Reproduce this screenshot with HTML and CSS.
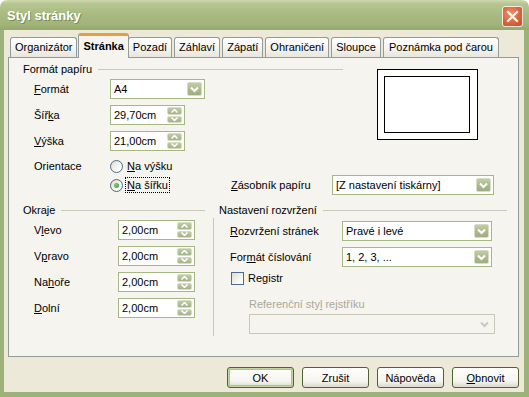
FILE: index.html
```html
<!DOCTYPE html>
<html lang="cs">
<head>
    <meta charset="UTF-8">
    <title>Styl stránky</title>
    <link rel="stylesheet" href="styles.css">
</head>
<body>

    <div class="window">
        <div class="titlebar">
            <span class="title">Styl stránky</span>
            <span class="close">
                <svg viewBox="0 0 21 21" width="21" height="21"><path d="M6 6l9 9M15 6l-9 9" stroke="#fff" stroke-width="2.2" stroke-linecap="square"/></svg>
            </span>
        </div>

        <div class="frame">
            <div class="tabs">
                <span class="tab">Organizátor</span>
                <span class="tab active">Stránka</span>
                <span class="tab">Pozadí</span>
                <span class="tab">Záhlaví</span>
                <span class="tab">Zápatí</span>
                <span class="tab">Ohraničení</span>
                <span class="tab">Sloupce</span>
                <span class="tab wide">Poznámka pod čarou</span>
            </div>

            <div class="panel">
                <!-- formát papíru + náhled -->
                <div class="top">
                    <div class="paper">
                        <div class="sec-head"><span>Formát papíru</span><i class="rule"></i></div>
                        <div class="row">
                            <span class="lbl"><u>F</u>ormát</span>
                            <div class="combo w-format">
                                <span class="val">A4</span>
                                <span class="drop"><svg viewBox="0 0 9 7" width="9" height="7"><path d="M1 1.5l3.5 3.5 3.5-3.5" fill="none" stroke="#fff" stroke-width="2"/></svg></span>
                            </div>
                        </div>
                        <div class="row">
                            <span class="lbl">Šíř<u>k</u>a</span>
                            <div class="combo w-size">
                                <span class="val">29,70cm</span>
                                <span class="spin">
                                    <span class="sb"><svg viewBox="0 0 7 4" width="7" height="4"><path d="M0.5 3.5l3-3 3 3" fill="none" stroke="#fff" stroke-width="1.5"/></svg></span>
                                    <span class="sb"><svg viewBox="0 0 7 4" width="7" height="4"><path d="M0.5 0.5l3 3 3-3" fill="none" stroke="#fff" stroke-width="1.5"/></svg></span>
                                </span>
                            </div>
                        </div>
                        <div class="row">
                            <span class="lbl"><u>V</u>ýška</span>
                            <div class="combo w-size">
                                <span class="val">21,00cm</span>
                                <span class="spin">
                                    <span class="sb"><svg viewBox="0 0 7 4" width="7" height="4"><path d="M0.5 3.5l3-3 3 3" fill="none" stroke="#fff" stroke-width="1.5"/></svg></span>
                                    <span class="sb"><svg viewBox="0 0 7 4" width="7" height="4"><path d="M0.5 0.5l3 3 3-3" fill="none" stroke="#fff" stroke-width="1.5"/></svg></span>
                                </span>
                            </div>
                        </div>
                    </div>
                    <div class="preview"><div class="sheet"></div></div>
                </div>

                <div class="orient">
                    <div class="orient-line">
                        <span class="lbl">Orientace</span>
                        <span class="opt"><span class="radio"></span><span><u>N</u>a výšku</span></span>
                    </div>
                    <div class="orient-line second">
                        <span class="lbl"></span>
                        <span class="opt"><span class="radio checked"></span><span class="focus"><u>N</u>a šířku</span></span>
                        <span class="lbl tray"><u>Z</u>ásobník papíru</span>
                        <div class="combo w-tray">
                            <span class="val">[Z nastavení tiskárny]</span>
                            <span class="drop"><svg viewBox="0 0 9 7" width="9" height="7"><path d="M1 1.5l3.5 3.5 3.5-3.5" fill="none" stroke="#fff" stroke-width="2"/></svg></span>
                        </div>
                    </div>
                </div>

                <div class="bottom">
                    <!-- okraje -->
                    <div class="margins">
                        <div class="sec-head"><span>Okraje</span><i class="rule"></i></div>
                        <div class="row">
                            <span class="lbl lbl-m">V<u>l</u>evo</span>
                            <div class="combo w-margin">
                                <span class="val">2,00cm</span>
                                <span class="spin">
                                    <span class="sb"><svg viewBox="0 0 7 4" width="7" height="4"><path d="M0.5 3.5l3-3 3 3" fill="none" stroke="#fff" stroke-width="1.5"/></svg></span>
                                    <span class="sb"><svg viewBox="0 0 7 4" width="7" height="4"><path d="M0.5 0.5l3 3 3-3" fill="none" stroke="#fff" stroke-width="1.5"/></svg></span>
                                </span>
                            </div>
                        </div>
                        <div class="row">
                            <span class="lbl lbl-m">V<u>p</u>ravo</span>
                            <div class="combo w-margin">
                                <span class="val">2,00cm</span>
                                <span class="spin">
                                    <span class="sb"><svg viewBox="0 0 7 4" width="7" height="4"><path d="M0.5 3.5l3-3 3 3" fill="none" stroke="#fff" stroke-width="1.5"/></svg></span>
                                    <span class="sb"><svg viewBox="0 0 7 4" width="7" height="4"><path d="M0.5 0.5l3 3 3-3" fill="none" stroke="#fff" stroke-width="1.5"/></svg></span>
                                </span>
                            </div>
                        </div>
                        <div class="row">
                            <span class="lbl lbl-m">Na<u>h</u>oře</span>
                            <div class="combo w-margin">
                                <span class="val">2,00cm</span>
                                <span class="spin">
                                    <span class="sb"><svg viewBox="0 0 7 4" width="7" height="4"><path d="M0.5 3.5l3-3 3 3" fill="none" stroke="#fff" stroke-width="1.5"/></svg></span>
                                    <span class="sb"><svg viewBox="0 0 7 4" width="7" height="4"><path d="M0.5 0.5l3 3 3-3" fill="none" stroke="#fff" stroke-width="1.5"/></svg></span>
                                </span>
                            </div>
                        </div>
                        <div class="row">
                            <span class="lbl lbl-m"><u>D</u>olní</span>
                            <div class="combo w-margin">
                                <span class="val">2,00cm</span>
                                <span class="spin">
                                    <span class="sb"><svg viewBox="0 0 7 4" width="7" height="4"><path d="M0.5 3.5l3-3 3 3" fill="none" stroke="#fff" stroke-width="1.5"/></svg></span>
                                    <span class="sb"><svg viewBox="0 0 7 4" width="7" height="4"><path d="M0.5 0.5l3 3 3-3" fill="none" stroke="#fff" stroke-width="1.5"/></svg></span>
                                </span>
                            </div>
                        </div>
                    </div>

                    <!-- nastavení rozvržení -->
                    <div class="layout">
                        <div class="sec-head"><span>Nastavení rozvržení</span><i class="rule"></i></div>
                        <div class="layout-body">
                            <div class="row">
                                <span class="lbl lbl-l"><u>R</u>ozvržení stránek</span>
                                <div class="combo w-layout">
                                    <span class="val">Pravé i levé</span>
                                    <span class="drop"><svg viewBox="0 0 9 7" width="9" height="7"><path d="M1 1.5l3.5 3.5 3.5-3.5" fill="none" stroke="#fff" stroke-width="2"/></svg></span>
                                </div>
                            </div>
                            <div class="row">
                                <span class="lbl lbl-l">For<u>m</u>át číslování</span>
                                <div class="combo w-layout">
                                    <span class="val">1, 2, 3, ...</span>
                                    <span class="drop"><svg viewBox="0 0 9 7" width="9" height="7"><path d="M1 1.5l3.5 3.5 3.5-3.5" fill="none" stroke="#fff" stroke-width="2"/></svg></span>
                                </div>
                            </div>
                            <div class="check-row"><span class="checkbox"></span><span>Re<u>g</u>istr</span></div>
                            <div class="ref-label">Referenční sty<u>l</u> rejstříku</div>
                            <div class="combo w-ref disabled">
                                <span class="val"></span>
                                <span class="drop"><svg viewBox="0 0 9 7" width="9" height="7"><path d="M1 1.5l3.5 3.5 3.5-3.5" fill="none" stroke="#c9c8bd" stroke-width="2"/></svg></span>
                            </div>
                        </div>
                    </div>
                </div>
            </div>

            <div class="buttons">
                <button class="btn default">OK</button>
                <button class="btn">Zrušit</button>
                <button class="btn">Nápověda</button>
                <button class="btn"><u>O</u>bnovit</button>
            </div>
        </div>
    </div>

</body>
</html>
```

FILE: styles.css
```css
:root {
    --face: #ece9d8;
    --panel: #f5f4ef;
    --frame: #9db27a;
    --edit-border: #a5b883;
    --rule: #c9c8bb;
    --tab-border: #919b9c;
}

* {
    margin: 0;
    padding: 0;
    box-sizing: border-box;
}

body {
    background: #fff;
    font-family: "Liberation Sans", Tahoma, Arial, sans-serif;
    font-size: 11px;
    color: #000;
}

u {
    text-underline-offset: 1px;
}

.window {
    width: 529px;
    height: 397px;
    display: flex;
    flex-direction: column;
}

/* ---------- titulek ---------- */
.titlebar {
    height: 30px;
    display: flex;
    align-items: center;
    justify-content: space-between;
    padding: 0 6px 0 7px;
    border-radius: 7px 7px 0 0;
    background: linear-gradient(#cfd9af 0%, #b7c692 12%, #a9bb83 45%, #a2b47b 80%, #95a96c 100%);
}

.title {
    font-weight: bold;
    font-size: 13px;
    color: #fff;
    text-shadow: 1px 1px 0 #7d8f58;
    padding-top: 1px;
}

.close {
    width: 21px;
    height: 21px;
    border: 1px solid #f6ece4;
    border-radius: 3px;
    background: radial-gradient(circle at 40% 35%, #ee9068, #dc5f36 60%, #c54d28);
    display: flex;
    margin-top: 2px;
}

.close svg {
    margin: -1px;
}

/* ---------- rám ---------- */
.frame {
    flex: 1;
    display: flex;
    flex-direction: column;
    background: var(--face);
    border-left: 4px solid var(--frame);
    border-right: 5px solid var(--frame);
    border-bottom: 5px solid var(--frame);
    padding: 3px 5px 0 4px;
}

.tabs {
    display: flex;
    align-items: flex-end;
    height: 24px;
    padding-left: 2px;
    position: relative;
    z-index: 1;
}

.tab {
    height: 20px;
    line-height: 19px;
    padding: 0 4px;
    margin-right: 2px;
    border: 1px solid var(--tab-border);
    border-bottom: none;
    border-radius: 3px 3px 0 0;
    background: linear-gradient(#ffffff, #f3f2ec 60%, #e8e6dc);
    white-space: nowrap;
}

.tab.active {
    height: 25px;
    line-height: 20px;
    margin: 0 0 -1px -1px;
    padding: 0 4px;
    font-weight: bold;
    border-top: 3px solid #e5a043;
    background: var(--panel);
}

.tab.active + .tab {
    margin-left: -1px;
}

.tab.wide {
    width: 116px;
    text-align: center;
}

.panel {
    height: 300px;
    border: 1px solid var(--tab-border);
    background: var(--panel);
    padding-top: 4px;
}

/* ---------- sekce ---------- */
.sec-head {
    display: flex;
    align-items: center;
    height: 14px;
}

.sec-head .rule {
    flex: 1;
    height: 1px;
    margin-left: 6px;
    background: var(--rule);
}

.row {
    display: flex;
    align-items: center;
    height: 26px;
}

.lbl {
    padding-left: 11px;
    width: 87px;
    flex-shrink: 0;
    white-space: nowrap;
}

.combo {
    height: 20px;
    display: flex;
    align-items: stretch;
    background: #fff;
    border: 1px solid var(--edit-border);
}

.combo .val {
    flex: 1;
    padding-left: 3px;
    line-height: 18px;
    white-space: nowrap;
    overflow: hidden;
}

.drop {
    width: 15px;
    margin: 2px 2px 2px 0;
    border: 1px solid #d6ddc3;
    border-radius: 2px;
    background: linear-gradient(#c2cda7, #aab98c 55%, #9fae81);
    display: flex;
    align-items: center;
    justify-content: center;
}

.spin {
    width: 15px;
    margin: 1px 2px 1px 0;
    display: flex;
    flex-direction: column;
    gap: 1px;
}

.sb {
    flex: 1;
    border: 1px solid #d6ddc3;
    border-radius: 2px;
    background: linear-gradient(#c0cba5, #a4b386);
    display: flex;
    align-items: center;
    justify-content: center;
}

/* ---------- formát papíru ---------- */
.top {
    display: flex;
    align-items: flex-start;
}

.paper {
    margin-left: 14px;
    width: 320px;
}

.w-format { width: 95px; }
.w-size { width: 75px; }

.preview {
    margin: 7px 0 0 34px;
    width: 101px;
    height: 71px;
    border: 1px solid #000;
    background: #fff;
    padding: 6px 7px 6px 6px;
}

.sheet {
    width: 100%;
    height: 100%;
    border: 1px solid #000;
}

.orient {
    margin: 4px 0 0 14px;
}

.orient-line {
    display: flex;
    align-items: center;
    height: 16px;
}

.orient-line.second {
    height: 22px;
}

.opt {
    width: 121px;
    display: flex;
    align-items: center;
    gap: 4px;
}

.radio {
    width: 13px;
    height: 13px;
    border-radius: 50%;
    border: 1px solid #4f6a82;
    background: linear-gradient(135deg, #dcdcd4, #ffffff 80%);
    display: flex;
    align-items: center;
    justify-content: center;
}

.radio.checked::after {
    content: "";
    width: 5px;
    height: 5px;
    border-radius: 50%;
    background: radial-gradient(circle at 40% 40%, #7fd37a, #2c9a2c);
}

.focus {
    outline: 1px dotted #000;
    outline-offset: 1px;
}

.lbl.tray {
    padding-left: 0;
    width: 101px;
}

.w-tray { width: 162px; }

/* ---------- okraje + rozvržení ---------- */
.bottom {
    display: flex;
    margin-top: 7px;
}

.margins {
    margin-left: 14px;
    width: 182px;
}

.lbl-m { width: 95px; }
.w-margin { width: 77px; }

.layout {
    margin-left: 8px;
    width: 294px;
}

.layout .sec-head span {
    padding-left: 6px;
}

.layout-body {
    border-left: 1px solid var(--rule);
    margin-top: 1px;
    padding: 0 0 2px 16px;
}

.lbl-l {
    padding-left: 0;
    width: 112px;
}

.w-layout { width: 150px; }

.check-row {
    display: flex;
    align-items: center;
    gap: 4px;
    height: 14px;
    margin-top: 1px;
}

.checkbox {
    width: 13px;
    height: 13px;
    margin-left: 1px;
    border: 1px solid #4f6a82;
    background: linear-gradient(135deg, #dcdcd4, #ffffff 85%);
}

.ref-label {
    margin: 12px 0 0 19px;
    height: 14px;
    line-height: 14px;
    color: #aca899;
}

.w-ref {
    width: 246px;
    margin: 3px 0 0 19px;
}

.combo.disabled {
    background: transparent;
    border-color: #c9c7b8;
}

.combo.disabled .drop {
    background: transparent;
    border-color: transparent;
}

/* ---------- tlačítka ---------- */
.buttons {
    display: flex;
    justify-content: flex-end;
    gap: 8px;
    margin-top: 10px;
}

.btn {
    width: 67px;
    height: 21px;
    font: inherit;
    color: #000;
    border: 1px solid #4e6232;
    border-radius: 3px;
    background: linear-gradient(#ffffff, #f5f4ee 70%, #dcd9cc);
}

.btn.default {
    box-shadow: inset 0 0 0 1px #c3d6a0, inset 0 0 0 2px #aac489;
}
```
